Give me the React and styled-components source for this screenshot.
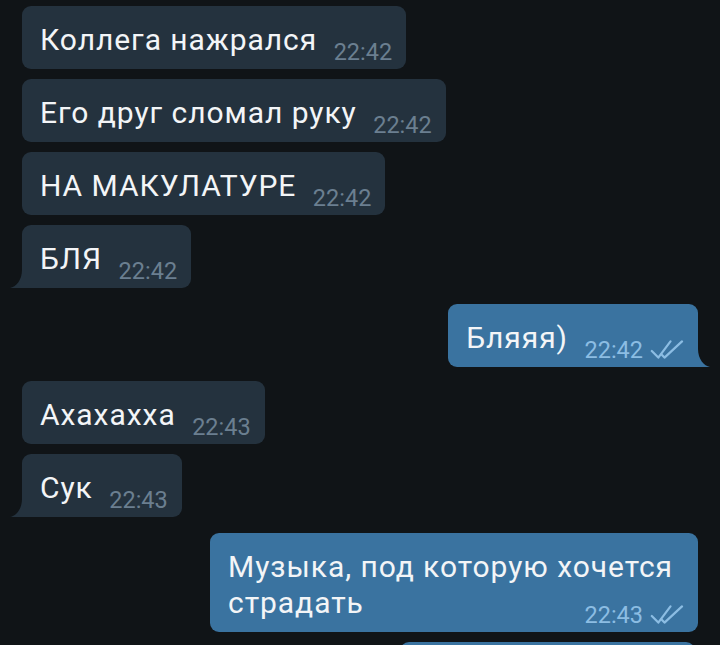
import React from 'react'
import styled, { createGlobalStyle } from 'styled-components'

const GlobalStyle = createGlobalStyle`
    html, body {
        margin: 0;
        padding: 0;
        background: #101417;
        overflow: hidden;
    }
    * {
        box-sizing: border-box;
    }
`

const Chat = styled.div`
    width: 720px;
    height: 645px;
    overflow: hidden;
    display: flex;
    flex-direction: column;
    padding: 6px 22px 0;
    font-family: Roboto, "Noto Sans", sans-serif;
`

const Group = styled.div`
    display: flex;
    flex-direction: column;
    align-items: ${p => (p.$out ? 'flex-end' : 'flex-start')};
    gap: 10px;
    margin-top: ${p => p.$top || 0}px;
`

const Bubble = styled.div`
    position: relative;
    display: grid;
    max-width: 488px;
    padding: 16px 14px 11px 18px;
    border-radius: 9px;
    background: ${p => (p.$out ? '#3a73a0' : '#24323e')};
    color: #f3f5f7;
    ${p => p.$wide && 'width: 488px;'}
    ${p => p.$tail && (p.$out ? 'border-bottom-right-radius: 0;' : 'border-bottom-left-radius: 0;')}
`

const Text = styled.div`
    grid-area: 1 / 1;
    font-size: 30px;
    line-height: 36px;
    letter-spacing: 0.95px;
`

const Meta = styled.div`
    grid-area: 1 / 1;
    justify-self: end;
    align-self: end;
    margin-bottom: -6px;
    display: inline-flex;
    align-items: baseline;
    gap: 7px;
    white-space: nowrap;
    font-size: 23.5px;
    line-height: 23.5px;
    color: ${p => (p.$out ? '#8cbde3' : '#6b7f90')};
`

const Spacer = styled.span`
    display: inline-block;
    width: ${p => (p.$out ? 116 : 75)}px;
    height: 1px;
`

const Checks = styled.svg`
    width: 34px;
    height: 19px;
    align-self: flex-end;
    margin-bottom: 3px;
`

const Tail = styled.svg`
    position: absolute;
    bottom: 0;
    width: 12px;
    height: 18px;
    ${p => (p.$out ? 'right: -12px;' : 'left: -12px;')}
`

const Partial = styled.div`
    width: 295px;
    height: 60px;
    margin-right: 3px;
    border-radius: 9px;
    background: #3a73a0;
`

const CheckIcon = () => (
    <Checks viewBox="0 0 34 19" fill="none" stroke="currentColor" strokeWidth="2.2" strokeLinecap="round" strokeLinejoin="round">
        <path d="M1.8 11 L8.3 17.6 L20.5 1.4" />
        <path d="M11.5 14.4 L14.5 17.6 L32 1.4" />
    </Checks>
)

const TailShape = ({ out, color }) => (
    <Tail $out={out} viewBox="0 0 12 18">
        <path
            d={out ? 'M0 0 C0 10 6 17 12 18 L0 18 Z' : 'M12 0 C12 10 6 17 0 18 L12 18 Z'}
            fill={color}
        />
    </Tail>
)

// lines are passed separately so the last one ends where its words end
const Message = ({ lines, time, out, tail }) => (
    <Bubble $out={out} $tail={tail} $wide={lines.length > 1}>
        <Text>
            {lines.map((line, i) => (
                <React.Fragment key={i}>
                    {i > 0 && <br />}
                    <span>{line}</span>
                </React.Fragment>
            ))}
            <Spacer $out={out} />
        </Text>
        <Meta $out={out}>
            {time}
            {out && <CheckIcon />}
        </Meta>
        {tail && <TailShape out={out} color={out ? '#3a73a0' : '#24323e'} />}
    </Bubble>
)

export default function App() {
    return (
        <>
            <GlobalStyle />
            <Chat>
                <Group>
                    <Message lines={['Коллега нажрался']} time="22:42" />
                    <Message lines={['Его друг сломал руку']} time="22:42" />
                    <Message lines={['НА МАКУЛАТУРЕ']} time="22:42" />
                    <Message lines={['БЛЯ']} time="22:42" tail />
                </Group>
                <Group $out $top={16}>
                    <Message lines={['Бляяя)']} time="22:42" out tail />
                </Group>
                <Group $top={14}>
                    <Message lines={['Ахахахха']} time="22:43" />
                    <Message lines={['Сук']} time="22:43" tail />
                </Group>
                <Group $out $top={16}>
                    <Message lines={['Музыка, под которую хочется', 'страдать']} time="22:43" out />
                    <Partial />
                </Group>
            </Chat>
        </>
    )
}
